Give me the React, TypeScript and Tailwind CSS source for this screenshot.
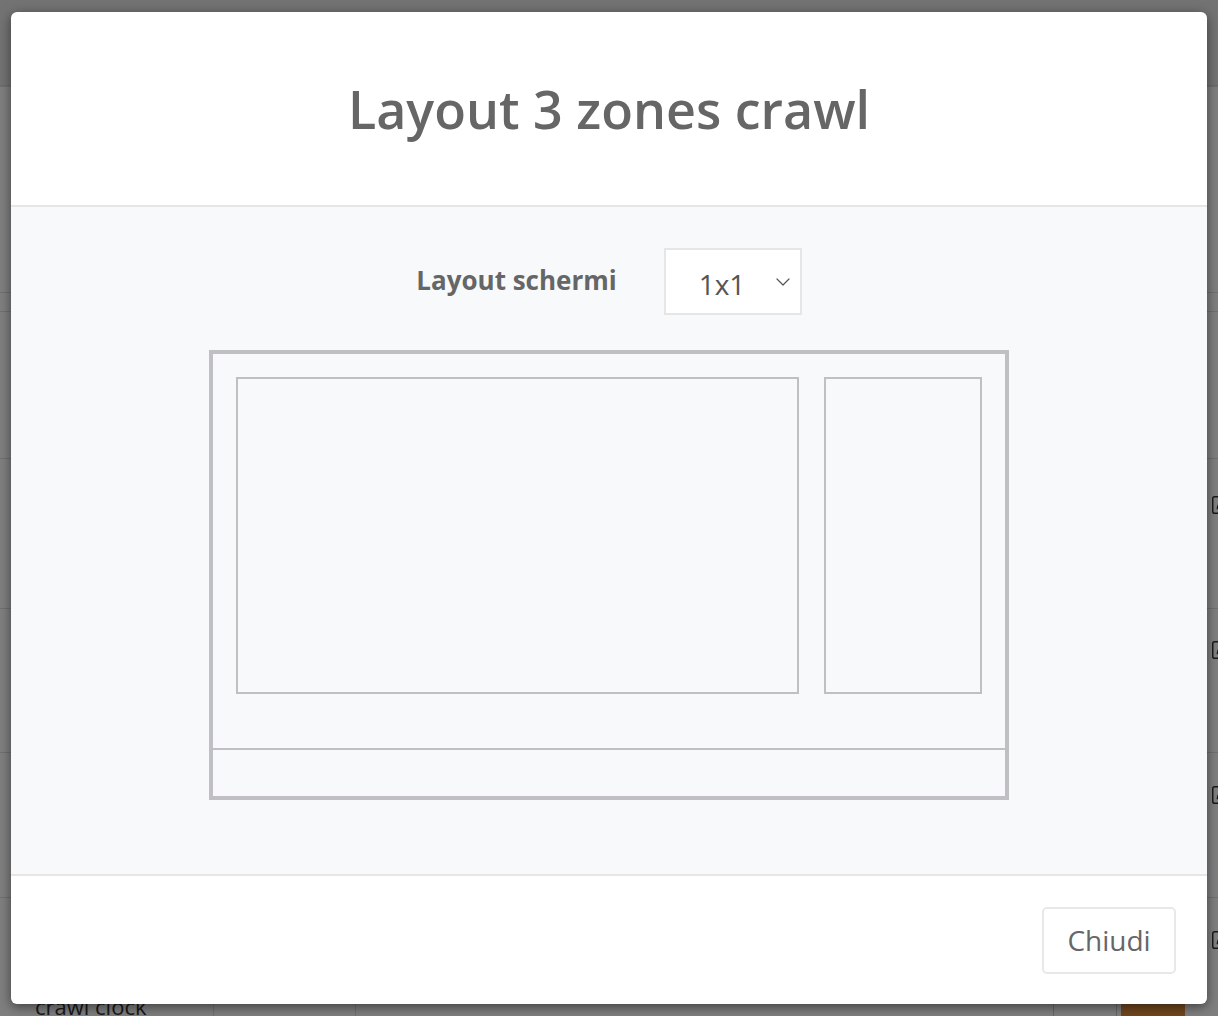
import React from 'react';
import { ChevronDown, SquarePen } from 'lucide-react';

// Lines of the table that sits behind the overlay
const rowLines = [86, 292, 311, 458, 608, 752, 897];

function Background() {
  return (
    <div className="absolute inset-0 bg-white">
      <div className="h-[86px] border-b border-[#d8d8d8] bg-[#e6e6e6]" />
      {rowLines.map((top) => (
        <div key={top} className="absolute left-0 right-0 h-px bg-[#e0e0e0]" style={{ top }} />
      ))}
      <div className="absolute right-[-14px] top-[494px] flex flex-col gap-[123px]">
        <SquarePen size={22} strokeWidth={1.6} color="#333" />
        <SquarePen size={22} strokeWidth={1.6} color="#333" />
        <SquarePen size={22} strokeWidth={1.6} color="#333" />
        <SquarePen size={22} strokeWidth={1.6} color="#333" />
      </div>
      <div className="absolute left-[35px] top-[990px] text-[22px] text-[#333]">crawl clock</div>
      <div className="absolute bottom-0 left-[213px] top-[960px] w-px bg-[#e0e0e0]" />
      <div className="absolute bottom-0 left-[355px] top-[960px] w-px bg-[#e0e0e0]" />
      <div className="absolute left-[1053px] top-[1000px] flex gap-[4px]">
        <div className="h-[20px] w-[64px] rounded-[4px] border border-[#ccc] bg-white" />
        <div className="h-[20px] w-[64px] rounded-[4px] bg-[#e38d3a]" />
      </div>
    </div>
  );
}

export default function App() {
  return (
    <div
      className="relative h-[1016px] w-full overflow-hidden"
      style={{ fontFamily: '"Open Sans", "Noto Sans", sans-serif' }}
    >
      <Background />
      <div className="absolute inset-0 bg-black/50" />

      {/* Modal */}
      <div className="absolute left-[11px] top-[12px] flex h-[992px] w-[1196px] flex-col overflow-hidden rounded-[6px] bg-white shadow-[0_3px_12px_rgba(0,0,0,0.5)]">
        <div className="flex h-[195px] shrink-0 items-center justify-center border-b-2 border-[#e6e6e6]">
          <h1 className="text-[52px] font-semibold text-[#666666]">Layout 3 zones crawl</h1>
        </div>

        <div className="flex flex-1 flex-col items-center bg-[#f8f9fb] pt-[41px]">
          <div className="flex items-center gap-[47px]">
            <span className="pb-[2px] text-[26px] font-bold text-[#666666]">Layout schermi</span>
            <div className="flex h-[67px] w-[138px] items-center justify-between border-2 border-[#e6e6e6] bg-white pl-[33px] pr-[5px]">
              <span className="pt-[4px] text-[28px] text-[#555555]">1x1</span>
              <ChevronDown size={24} strokeWidth={1.2} color="#555" />
            </div>
          </div>

          {/* Zones diagram */}
          <div className="mt-[35px] flex h-[450px] w-[800px] flex-col border-4 border-[#c0c0c4]">
            <div className="flex h-[394px] gap-[25px] px-[23px] pt-[23px]">
              <div className="h-[317px] w-[563px] border-2 border-[#c0c0c4]" />
              <div className="h-[317px] w-[158px] border-2 border-[#c0c0c4]" />
            </div>
            <div className="flex-1 border-t-2 border-[#c0c0c4]" />
          </div>
        </div>

        <div className="flex h-[130px] shrink-0 items-center justify-end border-t-2 border-[#e6e6e6] pr-[31px]">
          <button className="flex h-[67px] w-[134px] items-center justify-center rounded-[5px] border-2 border-[#e8e8e8] bg-white text-[28px] text-[#666666]">
            Chiudi
          </button>
        </div>
      </div>
    </div>
  );
}
